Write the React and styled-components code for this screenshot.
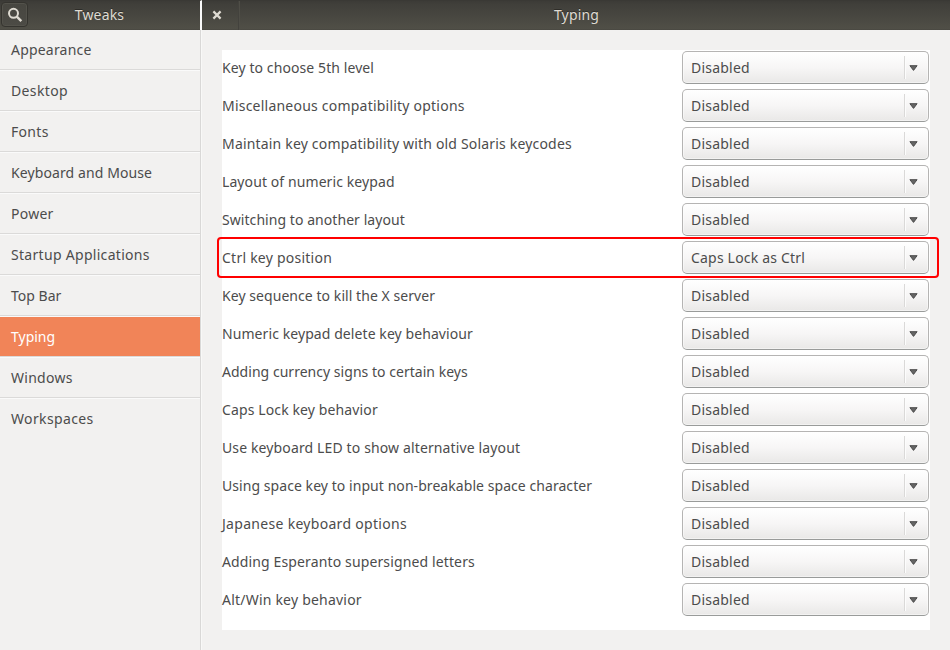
import React from "react";
import styled, { createGlobalStyle } from "styled-components";

const Global = createGlobalStyle`
  *, *::before, *::after { box-sizing: border-box; }
  body {
    margin: 0;
    background: #f2f1f0;
    color: #4c4c4c;
    font: 14px/20px "Noto Sans", "Open Sans", sans-serif;
  }
`;

const Window = styled.div`
  display: grid;
  grid-template-columns: 202px 1fr;
  grid-template-rows: 30px 1fr;
  width: 950px;
  height: 650px;
  overflow: hidden;
`;

const HeaderBar = styled.header`
  display: grid;
  grid-template-columns: ${(p) => p.$lead}px 1fr ${(p) => p.$trail}px;
  align-items: start;
  background: linear-gradient(#3c3b37 0, #403f3a 3px, #504f47 28px, #45443e 29px, #3a3935 30px);
  border-top: 1px solid #3a3935;
  ${(p) => p.$divided && "border-right: 2px solid #fafafa;"}
`;

const Title = styled.h1`
  margin: 0;
  font-size: 14px;
  line-height: 28px;
  font-weight: 400;
  text-align: center;
  letter-spacing: 0.16px;
  color: #dfdbd2;
  text-shadow: 0 -1px #2e2d29;
`;

const SearchButton = styled.button`
  display: grid;
  place-items: center;
  width: 27px;
  height: 25px;
  margin: 1px 0 0 1px;
  padding: 0;
  border: 1px solid #35342f;
  border-radius: 4px;
  background: linear-gradient(#474640, #4c4b45);
  box-shadow: inset 0 0 0 1px #53524b;
`;

const CloseButton = styled.button`
  display: flex;
  align-items: center;
  width: 37px;
  height: 29px;
  padding: 0 0 1px 10px;
  border: 0;
  border-right: 1px solid #43423d;
  background: none;
  box-shadow: 1px 0 #4f4e47;
`;

const Sidebar = styled.nav`
  display: flex;
  flex-direction: column;
  border-right: 1px solid #f8f8f7;
  box-shadow: inset -1px 0 #d9d8d7;
  padding-right: 1px;
`;

const SidebarItem = styled.a`
  height: 41px;
  padding: 11px 0 0 ${(p) => p.$indent}px;
  letter-spacing: ${(p) => p.$spacing}px;
  line-height: 18px;
  border-top: 1px solid #fafafa;
  border-bottom: 1px solid ${(p) => (p.$last ? "transparent" : "#dbdad9")};
  color: ${(p) => (p.$active ? "#fff" : "#4c4c4c")};
  background: ${(p) => (p.$active ? "#f18458" : "#f2f1f0")};
  background-clip: padding-box;
  &:first-child { height: 40px; border-top: 0; }
`;

const Content = styled.main`
  padding: 20px;
`;

const Panel = styled.section`
  display: flex;
  flex-direction: column;
  height: 580px;
  background: #fff;
`;

const SettingRow = styled.div`
  position: relative;
  display: grid;
  grid-template-columns: 1fr 247px;
  gap: 1px;
  align-items: center;
  height: 38px;
  padding: 1px 1px 4px 0;
`;

const Highlight = styled.div`
  position: absolute;
  inset: -3px -9px 0 -5px;
  border: 2px solid #f00;
  border-radius: 4px;
  pointer-events: none;
`;

const Label = styled.span`
  white-space: nowrap;
  line-height: 18px;
  letter-spacing: ${(p) => p.$spacing}px;
`;

const Combo = styled.button`
  display: grid;
  grid-template-columns: 1fr 24px;
  align-items: center;
  height: 33px;
  padding: 0 0 0 8px;
  border: 1px solid #b5b4b3;
  border-bottom-color: #999b9a;
  border-radius: 5px;
  background: linear-gradient(#fff, #f7f6f6 50%, #e9e8e7);
  box-shadow: inset 0 0 0 1px rgba(255, 255, 255, 0.45);
  color: #4c4c4c;
  font: inherit;
  line-height: 18px;
  text-align: left;
`;

const Value = styled.span`
  letter-spacing: ${(p) => p.$spacing}px;
`;

const ArrowCell = styled.span`
  display: flex;
  align-items: center;
  height: 23px;
  padding: 1px 0 0 4px;
  border-left: 1px solid #dad9d8;
  box-shadow: inset 1px 0 #fcfcfc;
`;

const SearchIcon = () => (
  <svg width="16" height="16" viewBox="0 0 16 16" fill="none" stroke="#dfdbd2">
    <circle cx="6.5" cy="6.3" r="4.5" strokeWidth="2" />
    <path d="M9.8 9.7 14.3 14.2" strokeWidth="2.5" />
  </svg>
);

const CloseIcon = () => (
  <svg width="10" height="10" viewBox="0 0 10 10" fill="none" stroke="#dfdbd2" strokeWidth="2.2">
    <path d="M1.4 1.4 8.6 8.6M8.6 1.4 1.4 8.6" />
  </svg>
);

const ArrowIcon = () => (
  <svg width="9" height="6" viewBox="0 0 9 6">
    <path d="M.9.7h7.2L4.5 5.4Z" fill="#666" stroke="#4c4c4c" strokeWidth="1" strokeLinejoin="round" />
  </svg>
);

const sections = [
  ["Appearance", 0.2],
  ["Desktop", 0.36],
  ["Fonts", 0.3],
  ["Keyboard and Mouse", 0.1],
  ["Power", 0.25],
  ["Startup Applications", 0.3],
  ["Top Bar", 0.02],
  ["Typing", 0],
  ["Windows", 0.27],
  ["Workspaces", 0.36],
];

const settings = [
  ["Key to choose 5th level", 0.09],
  ["Miscellaneous compatibility options", 0.22],
  ["Maintain key compatibility with old Solaris keycodes", 0.18],
  ["Layout of numeric keypad", 0.09],
  ["Switching to another layout", 0.06],
  ["Ctrl key position", 0.24, "Caps Lock as Ctrl"],
  ["Key sequence to kill the X server", 0.06],
  ["Numeric keypad delete key behaviour", 0.08],
  ["Adding currency signs to certain keys", 0.03],
  ["Caps Lock key behavior", 0.12],
  ["Use keyboard LED to show alternative layout", 0.13],
  ["Using space key to input non-breakable space character", 0.06],
  ["Japanese keyboard options", 0.3],
  ["Adding Esperanto supersigned letters", 0.13],
  ["Alt/Win key behavior", 0.21],
];

export default function App() {
  return (
    <>
      <Global />
      <Window>
        <HeaderBar $lead={28} $trail={29} $divided>
          <SearchButton aria-label="Search"><SearchIcon /></SearchButton>
          <Title>Tweaks</Title>
        </HeaderBar>
        <HeaderBar $lead={37} $trail={36}>
          <CloseButton aria-label="Close"><CloseIcon /></CloseButton>
          <Title>Typing</Title>
        </HeaderBar>
        <Sidebar>
          {sections.map(([name, spacing], i) => (
            <SidebarItem
              key={name}
              $spacing={spacing}
              $indent={11}
              $active={name === "Typing"}
              $last={i === sections.length - 1}
            >
              {name}
            </SidebarItem>
          ))}
        </Sidebar>
        <Content>
          <Panel>
            {settings.map(([name, spacing, value]) => (
              <SettingRow key={name}>
                <Label $spacing={spacing}>{name}</Label>
                <Combo>
                  <Value $spacing={value ? 0.19 : 0.22}>{value || "Disabled"}</Value>
                  <ArrowCell><ArrowIcon /></ArrowCell>
                </Combo>
                {value && <Highlight />}
              </SettingRow>
            ))}
          </Panel>
        </Content>
      </Window>
    </>
  );
}
